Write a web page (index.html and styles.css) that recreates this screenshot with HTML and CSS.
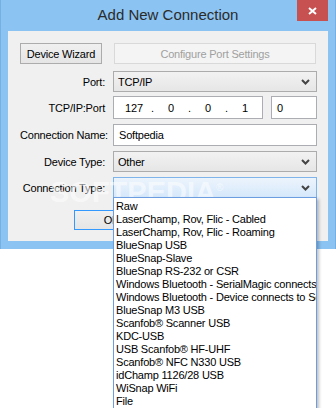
FILE: index.html
```html
<!DOCTYPE html>
<html lang="en">
<head>
    <meta charset="UTF-8">
    <title>Add New Connection</title>
    <link rel="stylesheet" href="styles.css">
</head>
<body>

<div class="window">
    <div class="titlebar">
        <span class="title">Add New Connection</span>
        <div class="close">
            <svg width="9" height="8" viewBox="0 0 9 8"><path d="M1 1 L8 7 M8 1 L1 7" stroke="#fff" stroke-width="2" fill="none"/></svg>
        </div>
    </div>

    <div class="client">
        <div class="top-buttons">
            <button class="btn wizard">Device Wizard</button>
            <button class="btn disabled">Configure Port Settings</button>
        </div>

        <div class="row row-port">
            <label>Port:</label>
            <div class="select">
                <span>TCP/IP</span>
                <svg width="9" height="6" viewBox="0 0 9 6"><polyline points="1,1 4.5,4.5 8,1" stroke="#444" stroke-width="2" fill="none"/></svg>
            </div>
        </div>

        <div class="row row-ip">
            <label>TCP/IP:Port</label>
            <div class="ip-box">
                <span class="octet">127</span><span class="dot">.</span>
                <span class="octet">0</span><span class="dot">.</span>
                <span class="octet">0</span><span class="dot">.</span>
                <span class="octet">1</span>
            </div>
            <div class="textbox port">0</div>
        </div>

        <div class="row row-name">
            <label>Connection Name:</label>
            <div class="textbox name">Softpedia</div>
        </div>

        <div class="row">
            <label>Device Type:</label>
            <div class="select">
                <span>Other</span>
                <svg width="9" height="6" viewBox="0 0 9 6"><polyline points="1,1 4.5,4.5 8,1" stroke="#444" stroke-width="2" fill="none"/></svg>
            </div>
        </div>

        <div class="row">
            <label>Connection Type:</label>
            <div class="select open">
                <span></span>
                <svg width="9" height="6" viewBox="0 0 9 6"><polyline points="1,1 4.5,4.5 8,1" stroke="#444" stroke-width="2" fill="none"/></svg>
            </div>
        </div>

        <div class="bottom-buttons">
            <button class="btn default">OK</button>
            <button class="btn">Cancel</button>
        </div>

        <div class="watermark">SOFTPEDIA<sup>®</sup></div>

        <!-- open list of the Connection Type combo -->
        <ul class="dropdown">
            <li>Raw</li>
            <li>LaserChamp, Rov, Flic - Cabled</li>
            <li>LaserChamp, Rov, Flic - Roaming</li>
            <li>BlueSnap USB</li>
            <li>BlueSnap-Slave</li>
            <li>BlueSnap RS-232 or CSR</li>
            <li>Windows Bluetooth - SerialMagic connects to Device</li>
            <li>Windows Bluetooth - Device connects to SerialMagic</li>
            <li>BlueSnap M3 USB</li>
            <li>Scanfob® Scanner USB</li>
            <li>KDC-USB</li>
            <li>USB Scanfob® HF-UHF</li>
            <li>Scanfob® NFC N330 USB</li>
            <li>idChamp 1126/28 USB</li>
            <li>WiSnap WiFi</li>
            <li>File</li>
        </ul>
    </div>
</div>

</body>
</html>
```

FILE: styles.css
```css
html, body {
    min-height: 408px;
}

body {
    margin: 0;
    background: #fff;
    font-family: "Liberation Sans", Arial, sans-serif;
    font-size: 11px;
    letter-spacing: -0.2px;
    color: #000;
}

.window {
    width: 336px;
    box-sizing: border-box;
    background: #8bc3f2;
    border-left: 1px solid #76b0e2;
    border-right: 1px solid #76b0e2;
    padding: 0 7px 8px 7px;
}

.titlebar {
    height: 31px;
    display: grid;
    grid-template-columns: 1fr auto 1fr;
    align-items: start;
}

.title {
    grid-column: 2;
    margin-top: 6px;
    font-size: 15px;
    letter-spacing: 0;
    color: #2b2b2b;
}

.close {
    grid-column: 3;
    justify-self: end;
    width: 31px;
    height: 21px;
    background: #c75050;
    display: flex;
    align-items: center;
    justify-content: center;
}

.client {
    position: relative;
    height: 210px;
    background: #f0f0f0;
    padding: 12px 0 0 12px;
    box-sizing: border-box;
}

.btn {
    font-family: inherit;
    font-size: 11px;
    letter-spacing: -0.2px;
    color: #000;
    height: 21px;
    padding: 0;
    border: 1px solid #acacac;
    background: linear-gradient(#f0f0f0, #e5e5e5);
}

.top-buttons {
    display: flex;
    gap: 12px;
}

.wizard {
    width: 82px;
}

.btn.disabled {
    width: 202px;
    color: #a0a0a0;
    border-color: #d9d9d9;
    background: #f4f4f4;
}

.row {
    display: flex;
    align-items: center;
    gap: 8px;
    margin-top: 5px;
}

.row label {
    width: 85px;
    text-align: right;
    white-space: nowrap;
}

.row-port {
    margin-top: 7px;
}

.row-ip {
    margin-top: 4px;
}

.select {
    width: 204px;
    height: 21px;
    box-sizing: border-box;
    border: 1px solid #acacac;
    background: linear-gradient(#f2f2f2, #e6e6e6);
    display: flex;
    align-items: center;
    justify-content: space-between;
    padding: 0 6px 0 4px;
}

.select.open {
    border-color: #7eb4ea;
    background: linear-gradient(#ecf4fc, #d6e8fb);
}

.textbox {
    height: 22px;
    box-sizing: border-box;
    border: 1px solid #abadb3;
    background: #fff;
    display: flex;
    align-items: center;
    padding-left: 5px;
}

.name {
    width: 204px;
}

.ip-box {
    width: 150px;
    height: 23px;
    box-sizing: border-box;
    border: 1px solid #abadb3;
    background: #fff;
    display: flex;
    align-items: center;
    padding-left: 5px;
}

.octet {
    width: 30px;
    text-align: center;
}

.dot {
    width: 7px;
    text-align: center;
}

.port {
    width: 46px;
    height: 23px;
}

.bottom-buttons {
    display: flex;
    gap: 8px;
    margin: 12px 0 0 54px;
}

.bottom-buttons .btn {
    width: 75px;
    height: 20px;
}

.btn.default {
    border-color: #3399ff;
}

.watermark {
    position: absolute;
    left: 42px;
    top: 145px;
    font-size: 29px;
    font-weight: bold;
    letter-spacing: 0;
    color: rgba(255, 255, 255, 0.55);
}

.watermark sup {
    font-size: 10px;
    font-weight: normal;
}

.dropdown {
    position: absolute;
    z-index: 2;
    left: 105px;
    top: 166px;
    width: 204px;
    box-sizing: border-box;
    margin: 0;
    padding: 2px 0 0 0;
    list-style: none;
    background: #fff;
    border: 1px solid #6b9de0;
    box-shadow: 2px 2px 3px rgba(0, 0, 0, 0.25);
    overflow: hidden;
}

.dropdown li {
    height: 13px;
    line-height: 13px;
    padding-left: 2px;
    white-space: nowrap;
}
```
